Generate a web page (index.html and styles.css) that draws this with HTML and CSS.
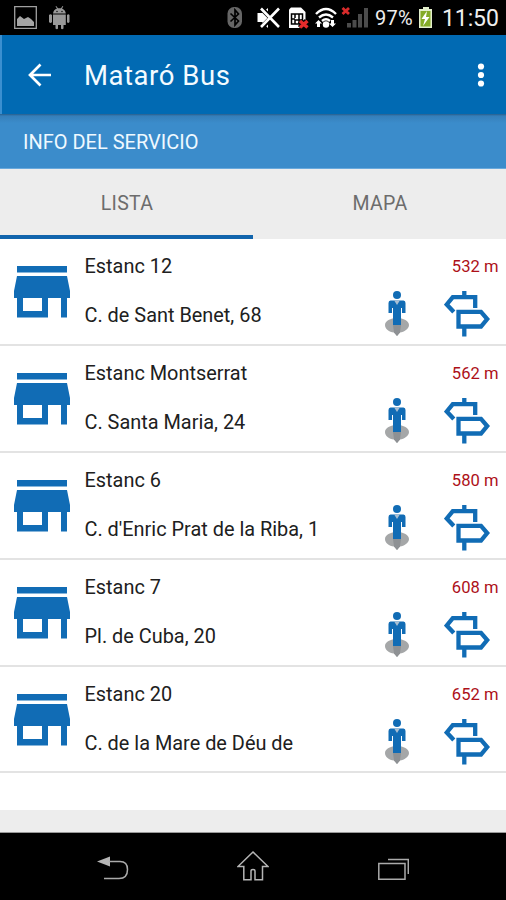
FILE: index.html
```
<!DOCTYPE html>
<html lang="es">
<head>
<meta charset="utf-8">
<title>Mataró Bus</title>
<link rel="stylesheet" href="styles.css">
</head>
<body>
<svg class="defs" width="0" height="0" aria-hidden="true">
  <symbol id="store" viewBox="0 0 56 52"><path fill="#116cb5" fill-rule="evenodd" d="M3 0H53V6.500H3ZM3 10H53L56 25V32H53V51.500H47V32H34V51.500H3V32H0V25ZM9 32V45H28V32Z"/></symbol>
  <symbol id="person" viewBox="0 0 24 46"><path fill="#a5a7a8" d="M12 27C18.500 27 24 30 24 34C24 38 19 41 15 41.500L12 45L9 41.500C4 41 0 38 0 34C0 30 5.500 27 12 27Z"/><path fill="#8e9194" d="M8 34H16L15 41.500L12 45L9 41.500Z"/><circle cx="12" cy="4" r="4" fill="#116cb5"/><path fill="#116cb5" d="M5.500 9.500H18.500Q20.500 9.500 20.500 12V22H17V17H16V34H8V17H7V22H3.500V12Q3.500 9.500 5.500 9.500Z"/><path fill="#aabfd2" d="M9.200 9.500H14.800L12 14Z"/></symbol>
  <symbol id="sign" viewBox="0 0 46 46"><path fill="none" stroke="#116cb5" stroke-width="4.300" d="M20.300 0V6M31.200 17V6.200H8.800L2.800 13.500L9.800 21M14.500 20.800H37L43.200 28L37 35.500H14.500ZM20.300 35V45.500"/></symbol>
</svg>
<div class="screen">
  <header class="status">
    <svg width="506" height="35" viewBox="0 0 506 35" aria-hidden="true">
      <path fill="none" stroke="#a0a0a0" stroke-width="1.300" d="M14.700 6.700H36.300V28.300H14.700Z"/>
      <path fill="#a5a5a5" d="M17 26V19L20 16L24 19L28 17L31 19L34 22V26Z"/>
      <path fill="#999" d="M53 13.500Q53.500 9.500 57 8.500L55.500 6.500L56.200 6L58 8.200H61L62.500 6L63.300 6.500L62 8.500Q65.500 10 65.800 13.500ZM53 14.500H65.800V25H63.500V28.500Q62 30 61 28.500V25H58V28.500Q57 30 55.500 28.500V25H53ZM49 15Q50.500 13.500 52 15V22Q50.500 24 49 22ZM67 15Q68.500 13.500 69.500 15V22Q68 24 67 22Z"/>
      <circle cx="57" cy="11.500" r=".7"/><circle cx="62" cy="11.500" r=".7"/>
      <rect x="227.500" y="7" width="14.500" height="21" rx="6.500" fill="#666"/><path fill="none" stroke="#000" stroke-width="1.700" d="M230.500 13.500L238.500 21L235 25V10L238.500 14L230.500 21.500"/>
      <path fill="#fff" d="M257.500 13H262L268 8V28L262 22H257.500Z"/><path stroke="#000" stroke-width="5" d="M262 9L280 27M280 9L262 27"/><path stroke="#fff" stroke-width="2.600" d="M261 8.500L279 27M279 8.500L261 27"/>
      <path fill="#fff" d="M291 7.500H301L305.500 12V28H289V9.500Z"/><path fill="none" stroke="#000" stroke-width="1.500" d="M291.500 14H302.500V24H291.500ZM295 14V18M299 14V24M291.500 19H295M295 24V20H302"/><path stroke="#000" stroke-width="6" d="M300 21L307 28M307 21L300 28"/><path stroke="#e52b2b" stroke-width="3.400" d="M300 21L307.500 27.500M307.500 21L300 27.500"/>
      <g fill="none" stroke="#fff" stroke-width="2.400"><path d="M316 14Q326 4 336 14M319 17.500Q326 11.500 333 17.500M322 21Q326 17.500 330 21"/></g><circle cx="326" cy="24.500" r="3.200" fill="#fff"/><path fill="#fff" d="M318.500 20L322 23.500H320V27H317V23.500H315ZM331 20H334V23.500H336L332.500 27L329 23.500H331Z"/>
      <path stroke="#d92b2b" stroke-width="2.800" d="M342.500 8L349 14M349 8L342.500 14"/>
      <path fill="#4c4c4c" d="M347 23H351V27.500H347ZM352.500 20H356.500V27.500H352.500ZM358 14H362V27.500H358ZM364 8H368V27.500H364Z"/>
      <path fill="#e3efcc" d="M423 7H429V9H432V28H419V9H423Z"/><path fill="#84ab27" d="M420.500 11H430.500V26.500H420.500Z"/><path fill="#fff" d="M427 11L421.500 19H425L423 26L429.500 17H426Z"/>
    </svg>
    <span class="percent">97%</span><span class="clock">11:50</span>
  </header>
  <div class="appbar">
    <svg class="back" width="24" height="24" viewBox="0 0 24 24"><path fill="none" stroke="#fff" stroke-width="2.700" d="M23 12H2M12.500 1.500L2 12L12.500 22.500"/></svg>
    <h1>Mataró Bus</h1>
    <svg class="more" width="8" height="24" viewBox="0 0 8 24" fill="#fff"><circle cx="4" cy="3.500" r="3.100"/><circle cx="4" cy="12" r="3.100"/><circle cx="4" cy="20.500" r="3.100"/></svg>
  </div>
  <div class="info"><span>INFO DEL SERVICIO</span></div>
  <nav class="tabs"><div class="tab active"><span>LISTA</span></div><div class="tab"><span>MAPA</span></div></nav>
  <main class="list">
    <article class="row"><svg class="store"><use href="#store"/></svg><div class="text"><p>Estanc 12</p><p>C. de Sant Benet, 68</p></div><div class="side"><span class="dist">532 m</span><div class="actions"><svg class="person"><use href="#person"/></svg><svg class="sign"><use href="#sign"/></svg></div></div></article>
    <article class="row"><svg class="store"><use href="#store"/></svg><div class="text"><p>Estanc Montserrat</p><p>C. Santa Maria, 24</p></div><div class="side"><span class="dist">562 m</span><div class="actions"><svg class="person"><use href="#person"/></svg><svg class="sign"><use href="#sign"/></svg></div></div></article>
    <article class="row"><svg class="store"><use href="#store"/></svg><div class="text"><p>Estanc 6</p><p>C. d'Enric Prat de la Riba, 1</p></div><div class="side"><span class="dist">580 m</span><div class="actions"><svg class="person"><use href="#person"/></svg><svg class="sign"><use href="#sign"/></svg></div></div></article>
    <article class="row"><svg class="store"><use href="#store"/></svg><div class="text"><p>Estanc 7</p><p>Pl. de Cuba, 20</p></div><div class="side"><span class="dist">608 m</span><div class="actions"><svg class="person"><use href="#person"/></svg><svg class="sign"><use href="#sign"/></svg></div></div></article>
    <article class="row"><svg class="store"><use href="#store"/></svg><div class="text"><p>Estanc 20</p><p>C. de la Mare de Déu de</p></div><div class="side"><span class="dist">652 m</span><div class="actions"><svg class="person"><use href="#person"/></svg><svg class="sign"><use href="#sign"/></svg></div></div></article>
  </main>
  <div class="gap"></div>
  <footer class="nav">
    <svg width="32" height="32" viewBox="0 0 32 32"><path fill="#b5b5b5" d="M0 11.500L13 6.500V16.500Z"/><path fill="none" stroke="#aaa" stroke-width="1.500" d="M12 11.500H23Q30.500 11.500 30.500 19.500Q30.500 28.500 22 28.500H7"/></svg>
    <svg width="32" height="32" viewBox="0 0 32 32"><path fill="none" stroke="#b5b5b5" stroke-width="1.500" d="M16 2L1 16.500H6.800V29.800H14V21Q14 19.500 16 19.500Q18 19.500 18 21V29.800H25.500V16.500H31Z"/></svg>
    <svg width="32" height="32" viewBox="0 0 32 32"><path fill="none" stroke="#aaa" stroke-width="1.500" d="M1.800 13.500H28V29.300H1.800ZM11 9.500H31.300V24"/></svg>
  </footer>
</div>
</body>
</html>
```
FILE: styles.css
```
* { box-sizing: border-box; }
body { margin: 0; background: #000; font-family: Roboto, "Liberation Sans", sans-serif; }
h1, p { margin: 0; font-weight: 400; }
svg { display: block; flex: none; }
.defs { position: absolute; }
.screen { width: 506px; height: 900px; display: flex; flex-direction: column; overflow: hidden; background: #fff; }
.status { position: relative; height: 35px; flex: none; background: #000; color: #eee; }
.percent, .clock { position: absolute; line-height: 35px; white-space: nowrap; }
.percent { left: 375px; top: 1px; font-size: 20px; letter-spacing: .2px; }
.clock { left: 442px; top: 1px; font-size: 23px; letter-spacing: -.1px; }
.appbar { height: 79px; flex: none; display: flex; align-items: center; padding: 1px 21px 0 26px; background: #016ab3; border-left: 2px solid #3b8fd0; color: #f4fbff; }
.back { margin-right: 32px; }
.appbar h1 { flex: 1; font-size: 27.5px; line-height: 40px; letter-spacing: .55px; padding-top: 1px; }
.info { height: 55px; flex: none; padding-left: 23px; line-height: 56px; font-size: 20px; color: #eff9ff; border-bottom: 1px solid #69a9dc; background: linear-gradient(#285f8d 0, #367fba 2px, #3b8ccb 9px, #3b8ccb 100%); }
.tabs { height: 70px; flex: none; display: flex; background: #ededed; }
.tab { flex: 1; padding-left: 1px; text-align: center; font-size: 19.5px; line-height: 69px; letter-spacing: .3px; color: #6c6c6c; }
.active { border-bottom: 4px solid #1265ad; }
.list { height: 571px; flex: none; padding-top: .4px; }
.row { height: 106.8px; display: flex; padding: 0 7.5px 0 14px; border-bottom: 2px solid #e3e3e3; color: #202020; }
.store { width: 56px; height: 52px; margin: 27px 14.5px 0 0; }
.text { flex: 1; padding-top: 16px; font-size: 19.9px; line-height: 24px; white-space: nowrap; }
.text p + p { margin-top: 25px; }
.side { width: 114px; padding-top: 16px; }
.dist { display: block; text-align: right; font-size: 16.6px; line-height: 24px; color: #ad1018; }
.actions { display: flex; justify-content: space-between; padding: 12px 8.5px 0 0; }
.person { width: 24px; height: 46px; }
.sign { width: 46px; height: 46px; }
.gap { height: 23px; flex: none; background: #ededed; border-bottom: 1px solid #999; }
.nav { flex: 1; display: flex; justify-content: space-between; padding: 17px 97px 0 97px; background: #000; }
```
